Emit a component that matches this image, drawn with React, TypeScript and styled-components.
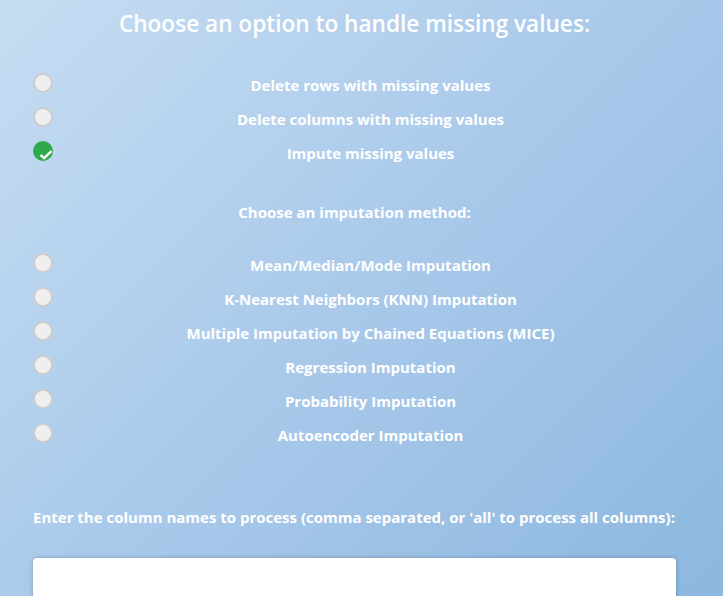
import * as React from "react";
import styled, { createGlobalStyle } from "styled-components";

const GlobalStyle = createGlobalStyle`
  html, body {
    margin: 0;
    padding: 0;
  }
  body {
    font-family: "Open Sans", "Noto Sans", sans-serif;
    color: #ffffff;
  }
`;

const Page = styled.div`
  width: 723px;
  height: 596px;
  overflow: hidden;
  box-sizing: border-box;
  padding: 0 33px;
  background: linear-gradient(135deg, #c6ddf2 0%, #a9c9ea 50%, #8cb7df 100%);
`;

const Title = styled.h2`
  margin: 0 -19px 0 -33px;
  padding-top: 7px;
  font-size: 22.6px;
  font-weight: 600;
  text-align: center;
  line-height: 34px;
`;

const OptionList = styled.div<{ $top: number }>`
  display: flex;
  flex-direction: column;
  gap: 12px;
  margin-top: ${p => p.$top}px;
`;

const Row = styled.label`
  display: flex;
  align-items: center;
  height: 22px;
  margin-right: 14px;
  cursor: pointer;
`;

const Radio = styled.span<{ $checked?: boolean }>`
  position: relative;
  flex: none;
  width: 20px;
  height: 20px;
  box-sizing: border-box;
  border-radius: 50%;
  margin-top: -4px;
  background: ${p => (p.$checked ? "#2fa84b" : "#efefef")};
  border: 2px solid ${p => (p.$checked ? "#33a94e" : "#cdcdcd")};
`;

const Check = styled.svg`
  position: absolute;
  right: -2px;
  bottom: -1px;
  width: 14px;
  height: 11px;
`;

const Label = styled.span`
  flex: 1;
  text-align: center;
  font-size: 15px;
  font-weight: 700;
  padding-left: 12px;
`;

const SubTitle = styled.div`
  margin: 38px -19px 0 -33px;
  text-align: center;
  font-size: 15px;
  font-weight: 700;
`;

const FieldLabel = styled.div`
  margin-top: 61px;
  font-size: 15px;
  font-weight: 700;
  white-space: nowrap;
`;

const TextInput = styled.input`
  display: block;
  margin-top: 31px;
  width: 643px;
  height: 50px;
  box-sizing: border-box;
  border: none;
  border-radius: 4px;
  background: #ffffff;
  box-shadow: 0 0 4px rgba(0, 0, 0, 0.25);
  outline: none;
`;

const handleOptions = [
  "Delete rows with missing values",
  "Delete columns with missing values",
  "Impute missing values",
];

const methods = [
  "Mean/Median/Mode Imputation",
  "K-Nearest Neighbors (KNN) Imputation",
  "Multiple Imputation by Chained Equations (MICE)",
  "Regression Imputation",
  "Probability Imputation",
  "Autoencoder Imputation",
];

function Option({ label, checked }: { label: string; checked?: boolean }) {
  return (
    <Row>
      <Radio $checked={checked}>
        {checked && (
          <Check viewBox="0 0 14 11">
            <path d="M1.5 6 L5.2 9.2 L12.5 2" fill="none" stroke="#ffffff" strokeWidth="2.4" />
          </Check>
        )}
      </Radio>
      <Label>{label}</Label>
    </Row>
  );
}

export default function App() {
  const [choice] = React.useState(2);
  return (
    <>
      <GlobalStyle />
      <Page>
        <Title>Choose an option to handle missing values:</Title>
        <OptionList $top={33}>
          {handleOptions.map((o, i) => (
            <Option key={o} label={o} checked={i === choice} />
          ))}
        </OptionList>
        <SubTitle>Choose an imputation method:</SubTitle>
        <OptionList $top={32}>
          {methods.map(m => (
            <Option key={m} label={m} />
          ))}
        </OptionList>
        <FieldLabel>
          Enter the column names to process (comma separated, or 'all' to process all columns):
        </FieldLabel>
        <TextInput type="text" />
      </Page>
    </>
  );
}
